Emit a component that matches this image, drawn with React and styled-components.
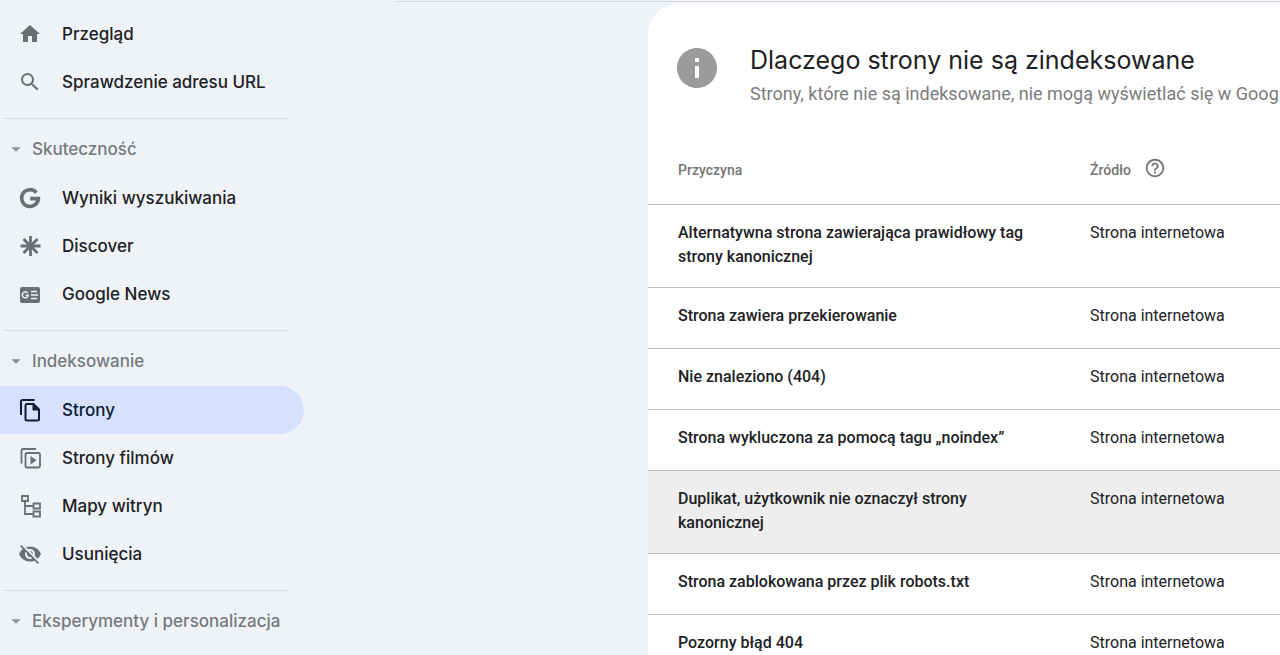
import React from 'react';
import styled, { createGlobalStyle } from 'styled-components';
import {
  MdArrowDropDown,
  MdHelpOutline,
  MdHome,
  MdInfo,
  MdSearch,
  MdVisibilityOff,
} from 'react-icons/md';

const GlobalStyle = createGlobalStyle`
  * {
    box-sizing: border-box;
  }
  body {
    margin: 0;
    background: #eff3f8;
    color: #202124;
    font-family: Roboto, 'Noto Sans', sans-serif;
    overflow: hidden;
  }
`;

const Page = styled.div`
  display: flex;
  align-items: stretch;
  height: 100vh;
  overflow: hidden;
`;

const Sidebar = styled.nav`
  flex: none;
  width: 304px;
  padding-top: 10px;
  font-family: Inter, 'Noto Sans', sans-serif;
`;
const NavLink = styled.a`
  display: flex;
  align-items: center;
  gap: 20px;
  height: 48px;
  padding-left: 18px;
  border-radius: 0 24px 24px 0;
  background: ${props => (props.$active ? '#d6e2fd' : 'transparent')};
  color: ${props => (props.$active ? '#0c1a38' : '#202124')};
  font-size: 17px;
  font-weight: 500;
  text-decoration: none;
  svg {
    flex: none;
    color: ${props => (props.$active ? '#101b30' : '#6b6f73')};
  }
`;
const Divider = styled.hr`
  height: 1px;
  margin: 12px 16px 5px 4px;
  border: none;
  background: #d9dce1;
`;
const SectionButton = styled.button`
  display: flex;
  align-items: center;
  gap: 5px;
  width: 100%;
  height: 50px;
  padding: 0 0 0 5px;
  border: none;
  background: none;
  color: #75797e;
  font-family: inherit;
  font-size: 17px;
  font-weight: 500;
  white-space: nowrap;
  cursor: pointer;
  svg {
    flex: none;
    color: #8a8d91;
  }
`;

const Main = styled.main`
  flex: 1;
  min-width: 0;
  margin: 1px 0 0 92px;
  padding: 2px 0 0 252px;
  border-top: 1px solid #d8dbe0;
`;
const Card = styled.section`
  height: 100%;
  background: #fff;
  border-radius: 30px 0 0 0;
  overflow: hidden;
`;
const CardHeader = styled.header`
  display: flex;
  align-items: flex-start;
  gap: 29px;
  padding: 40px 0 0 25px;
  svg {
    flex: none;
    color: #9b9b9b;
  }
`;
const CardTitle = styled.h1`
  margin: 0;
  font-family: Inter, 'Noto Sans', sans-serif;
  font-size: 25px;
  font-weight: 400;
  line-height: 32px;
  white-space: nowrap;
`;
const CardSubtitle = styled.p`
  margin: 6px 0 0;
  color: #7c7c7c;
  font-size: 18px;
  line-height: 24px;
  white-space: nowrap;
`;

const Table = styled.table`
  width: 100%;
  margin-top: 31px;
  border-collapse: separate;
  border-spacing: 0;
  table-layout: fixed;
  text-align: left;
`;
const HeadCell = styled.th`
  width: ${props => props.$width || 'auto'};
  height: 68px;
  padding: 0 0 2px ${props => (props.$first ? 30 : 0)}px;
  border-bottom: 1px solid #bfc1c3;
  color: #757575;
  font-size: 14px;
  font-weight: 500;
`;
const HeadLabel = styled.span`
  display: flex;
  align-items: center;
  gap: 13px;
  svg {
    margin-bottom: 4px;
  }
`;
const Row = styled.tr`
  background: ${props => (props.$hovered ? '#eeeeee' : '#fff')};
`;
const Reason = styled.td`
  height: 61px;
  padding: 16px 36px 18px 30px;
  border-bottom: 1px solid #bfc1c3;
  font-size: 16px;
  font-weight: 500;
  line-height: 24px;
  vertical-align: top;
`;
const Source = styled.td`
  padding: 16px 0 18px;
  border-bottom: 1px solid #bfc1c3;
  font-size: 16px;
  line-height: 24px;
  vertical-align: top;
  white-space: nowrap;
`;

const Icon = ({ children }) => (
  <svg width="24" height="24" viewBox="0 0 24 24" fill="none" stroke="currentColor" strokeWidth="2" aria-hidden="true">
    {children}
  </svg>
);

const GoogleIcon = () => (
  <Icon>
    <path d="M18.4 6.6A8.4 8.4 0 1 0 20.4 12.6H12.2" strokeWidth="3.6" />
  </Icon>
);

const DiscoverIcon = () => (
  <Icon>
    <path d="M12.5 2v20M2.5 12h20M5.5 5l14 14M19.5 5l-14 14" strokeWidth="2.8" />
  </Icon>
);

const NewsIcon = () => (
  <Icon>
    <rect x="2" y="5" width="20" height="16" rx="2" fill="currentColor" stroke="none" />
    <path d="M9.6 10.9A3 3 0 1 0 10.3 13.2H7.6" stroke="#eff3f8" strokeWidth="1.5" />
    <path d="M13 9.6h6M13 13h7M13 16.4h6" stroke="#eff3f8" strokeWidth="1.5" />
  </Icon>
);

const PagesIcon = () => (
  <Icon>
    <path d="M3 17V3.5A1.5 1.5 0 0 1 4.5 2H16.5" />
    <path d="M9 6h6.5L21 11.5V21a1.5 1.5 0 0 1-1.5 1.5H9A1.5 1.5 0 0 1 7.5 21V7.5A1.5 1.5 0 0 1 9 6z" />
    <path d="M14.5 6v6.5H21z" fill="currentColor" stroke="none" />
  </Icon>
);

const VideoPagesIcon = () => (
  <Icon>
    <path d="M3.5 17.5V4.5A1.5 1.5 0 0 1 5 3H18" strokeWidth="1.8" />
    <rect x="7.5" y="7" width="14.5" height="14.5" rx="1.5" strokeWidth="1.8" />
    <path d="M12.5 10v8.5l6-4.25z" fill="currentColor" stroke="none" />
  </Icon>
);

const SitemapIcon = () => (
  <Icon>
    <path d="M4 2h6v5H4zM15.5 9.5H22v5h-6.5zM15.5 17.5H22v5h-6.5zM7 7v13h8.5M7 12h8.5" strokeWidth="1.8" />
  </Icon>
);

const mainLinks = [
  { label: 'Przegląd', icon: <MdHome size={24} /> },
  { label: 'Sprawdzenie adresu URL', icon: <MdSearch size={24} /> },
];

const sections = [
  {
    title: 'Skuteczność',
    links: [
      { label: 'Wyniki wyszukiwania', icon: <GoogleIcon /> },
      { label: 'Discover', icon: <DiscoverIcon /> },
      { label: 'Google News', icon: <NewsIcon /> },
    ],
  },
  {
    title: 'Indeksowanie',
    links: [
      { label: 'Strony', icon: <PagesIcon />, active: true },
      { label: 'Strony filmów', icon: <VideoPagesIcon /> },
      { label: 'Mapy witryn', icon: <SitemapIcon /> },
      { label: 'Usunięcia', icon: <MdVisibilityOff size={24} /> },
    ],
  },
  { title: 'Eksperymenty i personalizacja', links: [] },
];

const reasons = [
  { text: 'Alternatywna strona zawierająca prawidłowy tag strony kanonicznej' },
  { text: 'Strona zawiera przekierowanie' },
  { text: 'Nie znaleziono (404)' },
  { text: 'Strona wykluczona za pomocą tagu „noindex”' },
  { text: 'Duplikat, użytkownik nie oznaczył strony kanonicznej', hovered: true },
  { text: 'Strona zablokowana przez plik robots.txt' },
  { text: 'Pozorny błąd 404' },
];

const renderLink = link => (
  <NavLink
    key={link.label}
    href="#"
    $active={link.active}
    aria-current={link.active ? 'page' : undefined}
  >
    {link.icon}
    {link.label}
  </NavLink>
);

const App = () => (
  <Page>
    <GlobalStyle />
    <Sidebar>
      {mainLinks.map(renderLink)}
      {sections.map(section => (
        <React.Fragment key={section.title}>
          <Divider />
          <SectionButton type="button">
            <MdArrowDropDown size={22} />
            {section.title}
          </SectionButton>
          {section.links.map(renderLink)}
        </React.Fragment>
      ))}
    </Sidebar>
    <Main>
      <Card>
        <CardHeader>
          <MdInfo size={48} />
          <div>
            <CardTitle>Dlaczego strony nie są zindeksowane</CardTitle>
            <CardSubtitle>
              Strony, które nie są indeksowane, nie mogą wyświetlać się w Goog
            </CardSubtitle>
          </div>
        </CardHeader>
        <Table>
          <thead>
            <tr>
              <HeadCell $first $width="442px">Przyczyna</HeadCell>
              <HeadCell>
                <HeadLabel>
                  Źródło
                  <MdHelpOutline size={22} />
                </HeadLabel>
              </HeadCell>
            </tr>
          </thead>
          <tbody>
            {reasons.map(reason => (
              <Row key={reason.text} $hovered={reason.hovered}>
                <Reason>{reason.text}</Reason>
                <Source>Strona internetowa</Source>
              </Row>
            ))}
          </tbody>
        </Table>
      </Card>
    </Main>
  </Page>
);

export default App;
